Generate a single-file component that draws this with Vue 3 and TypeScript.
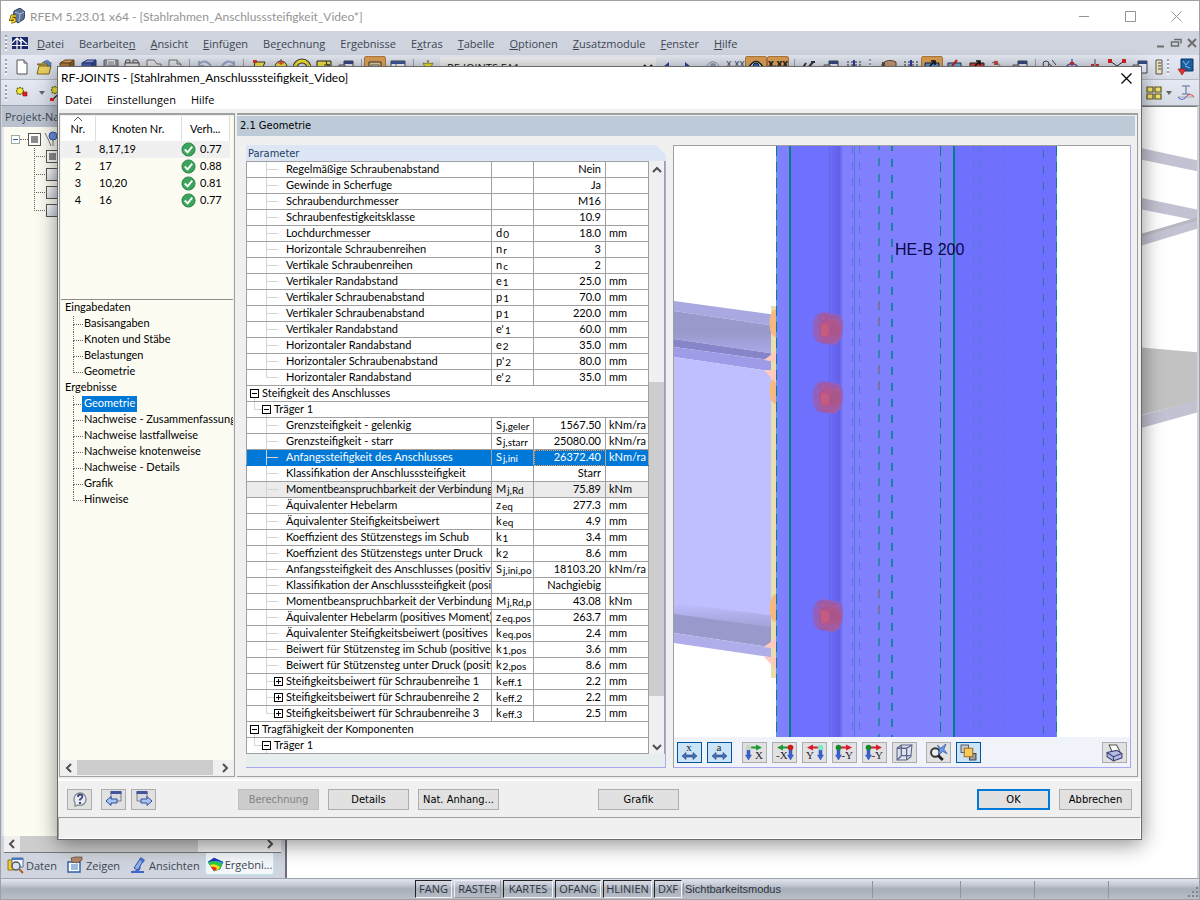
<script setup lang="ts">
import { h, ref } from 'vue'

type Stroke = [d: string, fill?: string, stroke?: string, width?: number]

const glyphs: Record<string, Stroke[]> = {
  page: [['M3 1h7l3 3v11h-10z', '#fff', '#555'], ['M10 1v3h3', '#dde', '#555']],
  open: [['M1 5h5l1-2h5v3h-10z', '#c9a93c', '#7b6414'], ['M1 15l2-8h12l-2 8z', '#e8cf5e', '#7b6414'], ['M8 3q4-4 6 1l1-1v4h-4l1-1q-1-3-3-1z', '#5f83b8', '#344f7e', 0.5]],
  boxBrown: [['M1 4l5-3h9l-4 3z', '#d9a466', '#6a4a22'], ['M1 4h10v11h-10z', '#b07a3a', '#6a4a22'], ['M11 4l4-3v11l-4 3z', '#8c5d27', '#6a4a22']],
  boxBlue: [['M1 4l5-3h9l-4 3z', '#8ea0e0', '#2b3a80'], ['M1 4h10v11h-10z', '#4b62bc', '#2b3a80'], ['M11 4l4-3v11l-4 3z', '#35488f', '#2b3a80']],
  disk: [['M1 1h14v14h-14z', '#9a9aa4', '#66666e'], ['M4 1h8v5h-8z', '#e4e4ea'], ['M5 3h6M5 5h6', '', '#888']],
  box: [['M2 1h4v3h-5zM9 1h4l2 3h-6z', '#ddd', '#555'], ['M1 4h14v11h-14z', '#eee', '#555']],
  copy: [['M1 1h7l3 4h4v10h-11l-3-7z', '#e8e8ee', '#777']],
  doc: [['M2 1h8l4 4v10h-12z', '#e8e8ee', '#777'], ['M10 1v4h4', '#ccc', '#777']],
  undo: [['M2 5q6-6 12 2M2 2v5h5', '', '#9aa7c7', 2]],
  redo: [['M14 5q-6-6-12 2M14 2v5h-5', '', '#9aa7c7', 2]],
  poly: [['M4 3h10l-4 10h-8z', '#f6e94c', '#333'], ['M2 1h4v3h-4z', '#e03020']],
  circ: [['M2 8a6 6 0 1 1 12 0z', '#f6e94c', '#333'], ['M8 0v6M5 4h6', '', '#d22']],
  ring: [['M1 9a7 7 0 0 1 14 0', '', '#333', 5], ['M1 9a7 7 0 0 1 14 0', '', '#f2e22c', 3]],
  flag: [['M1 2h14v12h-14z', '#f3e850', '#222'], ['M10 2l1 4h3M8 6h6', '', '#333']],
  win: [['M6 2h9v12h-9z', '#eef', '#444'], ['M6 2h9v3h-9z', '#364a86'], ['M1 6h6v4h-6z', '#ccc', '#555']],
  frame: [['M2 3h12v10h-12z', '#f2cf9a', '#333'], ['M4 6h8v4h-8z', '#fff', '#664']],
  table: [['M1 2h14v12h-14z', '#fff', '#444'], ['M1 2h14v3h-14z', '#3f5a9c'], ['M1 8h14M6 5v9', '', '#777']],
  star: [['M8 1l1 4 4-1-2 4 3 3-4 1-2 3-2-3-4-1 3-3-2-4 4 1z', '#f6ec2e', '#6d6a18', 0.7]],
  prev: [['M11 3l-6 5 6 5z', '#2c3f9c']],
  next: [['M5 3l6 5-6 5z', '#2c3f9c']],
  eye: [['M1 8q7-11 14 0q-7 8-14 0z', '#e2e7ef', '#8b95a8'], ['M5 7a3 3 0 1 0 6 0a3 3 0 1 0-6 0z', '#8ea0bb']],
  eyeOn: [['M1 8q7-11 14 0q-7 8-14 0z', '#fff', '#222', 1.5], ['M5 7a3 3 0 1 0 6 0a3 3 0 1 0-6 0z', '#3567c0', '#123']],
  pen: [['M2 10l4-6M8 9l5-6M11 3h4', '', '#333', 2]],
  hand: [['M1 5q6-6 14-2v6h-14z', '#c99b78', '#5b4030'], ['M1 3h3v9h-3z', '#555']],
  grid: [['M1 3h2M5 3h2M9 3h2M13 3h2M1 6h2M5 6h2M9 6h2M13 6h2', '', '#333', 1], ['M8 1v8', '', '#2a3bb0', 2]],
  move: [['M1 4h14v8h-14z', '#5a9bdc', '#124'], ['M4 9l6-6M7 2h4v4', '', '#111', 1.5]],
  moveRed: [['M1 4h14v8h-14z', '#d8433a', '#222'], ['M4 9l6-6M7 2h4v4', '', '#111', 1.5]],
  slash: [['M1 4h13v8h-13z', '#7cb0dd', '#235'], ['M5 7l5-6', '', '#c22', 2]],
  nodes: [['M2 4l4-2 4 5 5 3', '', '#568'], ['M4 2h4v4h-4z', '#c9463f']],
  link: [['M1 5a3 3 0 1 0 6 0a3 3 0 1 0-6 0zM7 5l7 5M10 1l4 5', '', '#444']],
  cut: [['M2 8q6-7 12 0M8 0v12', '', '#4b6fb5', 1.5], ['M6 3h4v3h-4z', '#c33']],
  mirror: [['M8 0v14', '', '#555'], ['M4 5h3v6h-3zM9 5h3v6h-3z', '#c33']],
  vee: [['M1 2l7 5 7-5', '', '#333'], ['M-1 0h4v4h-4zM13 0h4v4h-4z', '#d92020']],
  scroll: [['M6 1h6v14h-6z', '#f1e4b8', '#555'], ['M8 4h3M8 7h3M8 10h3', '', '#345']],
  photo: [['M3 0h12v12h-12z', '#1c5e9e', '#0c3560'], ['M5 2l3 4 3-4M7 7l5 2', '', '#7ec2f2'], ['M0 10h8l-4 6z', '#e22f2f', '#811', 0.6]],
  newNode: [['M5 2v8M1 6h8M2 3l6 6M8 3l-6 6', '', '#77731c', 2], ['M5 3v6M2 6h6M3 4l4 4M7 4l-4 4', '', '#f4ec3a', 1.4], ['M8 7h4v4h-4z', '#e02020', '#911', 0.6]],
  newLine: [['M6 1v8M2 5h8M3 2l6 6M9 2l-6 6', '', '#77731c', 2], ['M6 2v6M3 5h6M4 3l4 4M8 3l-4 4', '', '#f4ec3a', 1.4], ['M3 15l12-11', '', '#222', 1.2], ['M1 13h4v3h-4z', '#e02020']],
  quad: [['M1 2h6v5h-6zM9 2h6v5h-6zM1 9h6v5h-6zM9 9h6v5h-6z', '#f2e36c', '#5c5320', 1.2]],
  beam: [['M4 1h8M8 1v8M4 9h8', '', '#8492b4', 1.5], ['M0 12q4 5 8 0', '', '#4666e0', 1.2], ['M8 12q4-5 8 0', '', '#e54848', 1.2], ['M0 12h16', '', '#888', 0.6]],
  daten: [['M1 3h6v10h-6z', '#f2c832', '#997611'], ['M5 1h11v9h-11z', '#fff', '#4a6aa8'], ['M5 1h11v2h-11z', '#4a79c8'], ['M5 9a4 4 0 1 0 8 0a4 4 0 1 0-8 0z', '#d7e6f6', '#555', 1.4], ['M12 12l4 4', '', '#a4632c', 2]],
  zeigen: [['M1 5h12v10h-12z', '#fff', '#2b5fa8', 1.4], ['M4 8h7M4 10h7M4 12h7', '', '#3c78c8'], ['M4 1l4-1h7v3l-5 3-5-1z', '#b5876a', '#5b4434', 0.7]],
  ansicht: [['M1 15q8 0 9-5M2 15h12', '', '#4169c8', 2], ['M4 11l6-9 3 2-5 9z', '#8fb0ee', '#3050a0'], ['M9 2l2-2 4 3-2 3z', '#4a6cc8']],
  ergebnis: [['M1 5l6-4 9 4-3 7-6 2z', '#12a2e8', '#164b8a', 0.6], ['M1 5q8-3 14 2l-2 5-6 2z', '#30c848'], ['M3 8q5-2 10 2l-1 2-5 2z', '#f6e020'], ['M4 10q4-1 6 2l-3 2z', '#e82a18'], ['M1 5l6-4 9 4q-7-2-15 0z', '#2030c8']],
  help: [['M2 8a6 6 0 1 1 12 0a6 6 0 0 1-8 6l-3 1v-3a6 6 0 0 1-1-4z', '#e9ecf2', '#8a8f98', 1.4], ['M6 6q0-2.500 2-2.500q2.400 0 2.400 2q0 1.500-2.400 3v1', '', '#3d4c80', 1.8], ['M7 11h2v2h-2z', '#3d4c80']],
  pagePrev: [['M5 1h10v9h-10z', '#d9dade', '#7b7e86'], ['M4.500 0h11v3h-11z', '#44549c'], ['M0 10l5-4.500v2.500h6v4h-6v2.500z', '#a9c4ee', '#2b4da0']],
  pageNext: [['M1 1h10v9h-10z', '#d9dade', '#7b7e86'], ['M.5 0h11v3h-11z', '#44549c'], ['M16 10l-5-4.500v2.500h-6v4h6v2.500z', '#a9c4ee', '#2b4da0']],
  cube: [['M1 4l4-3h10l-1 11-4 3h-9z', '#dfe3ee', '#5b6688'], ['M1 4h9v11M10 4l5-3M5 1v10h9M5 11l-4 4', '', '#5b6688', 1.2]],
  unzoom: [['M1 8a4 4 0 1 0 8 0a4 4 0 1 0-8 0z', '#e8edf2', '#333', 1.8], ['M8 11l4 4', '', '#222', 2.6], ['M7 1l3 3 5-4-2 5 3 4-4-2-4 3 1-5z', '#6f9bea', '#2f51a8', 0.7]],
  layers: [['M1 1h7v7h-7z', '#c8ccd4', '#555c6a'], ['M9 9h6v6h-6z', '#9aa0ac', '#444'], ['M4 4h8v8h-8z', '#f8c95c', '#a07018']],
  printer: [['M3 1h7l3 6-7 1z', '#fff', '#555'], ['M1 8l9-2 5 3v4l-8 3-6-4z', '#b4bbe6', '#3b4070'], ['M1 8l6 4 8-3M7 12v4', '', '#3b4070']],
  logo: [['M5 3l6-3 5 4-1 7-6 4-5-4z', '#5d7396', '#2b3c58'], ['M6 4l5 2 4-2M11 6l-1 8', '', '#aebed8'], ['M7 8h-4l-1 3q4-1 4 1q0 2-4 2', '', '#5e4c0c', 3], ['M7 8h-4l-1 3q4-1 4 1q0 2-4 2', '', '#f4c81c', 1.7]],
  dlubal: [['M0 2h16v12h-16z', '#1c2a6e'], ['M0 10.500h16M0 8l5-5 5 5M8 3l7 6M5 3v11M9 4v10', '', '#fff', 1.2]],
  check: [['M1 8a7 7 0 1 1 14 0a7 7 0 1 1-14 0z', '#3ba55c', '#2c8048'], ['M4 8l3 3 5-6', '', '#fff', 2]],
  node: [['M5 5a4 4 0 1 0 8 0a4 4 0 1 0-8 0z', '#6f8fe0', '#3a55a0'], ['M1 2l4 8 2 5M9 9v6M12 4h4', '', '#777']],
}

const Glyph = (p: { name: string }) =>
  h(
    'svg',
    { viewBox: '0 0 16 16', 'aria-hidden': 'true' },
    glyphs[p.name].map(([d, fill, stroke, width]) =>
      h('path', { d, fill: fill || 'none', stroke: stroke || 'none', 'stroke-width': width ?? 1 }),
    ),
  )

const Chevron = (p: { dir: string }) =>
  h('svg', { viewBox: '0 0 10 10', 'aria-hidden': 'true' }, [
    h('path', {
      d: { left: 'M7 1L3 5l4 4', right: 'M3 1l4 4-4 4', up: 'M1 7l4-4 4 4', down: 'M1 3l4 4 4-4' }[p.dir],
      fill: 'none',
      stroke: '#505050',
      'stroke-width': 2,
    }),
  ])

const mainMenu: [string, string, string][] = [
  ['', 'D', 'atei'], ['Bearbeite', 'n', ''], ['', 'A', 'nsicht'], ['', 'E', 'infügen'], ['Be', 'r', 'echnung'],
  ['Er', 'g', 'ebnisse'], ['E', 'x', 'tras'], ['', 'T', 'abelle'], ['', 'O', 'ptionen'], ['', 'Z', 'usatzmodule'],
  ['', 'F', 'enster'], ['', 'H', 'ilfe'],
]

interface Tool { icon: string; w: number; on?: boolean }
const tools: Tool[] = [
  { icon: 'page', w: 22 }, { icon: 'open', w: 22 }, { icon: 'boxBrown', w: 23 }, { icon: 'boxBlue', w: 22 },
  { icon: 'disk', w: 21 }, { icon: 'box', w: 22 }, { icon: 'copy', w: 22 }, { icon: 'doc', w: 20 },
  { icon: 'sep', w: 8 }, { icon: 'undo', w: 23 }, { icon: 'redo', w: 24 }, { icon: 'sep', w: 6 },
  { icon: 'poly', w: 26 }, { icon: 'circ', w: 18 }, { icon: 'ring', w: 24 }, { icon: 'flag', w: 20 },
  { icon: 'win', w: 24 }, { icon: 'sep', w: 6 }, { icon: 'frame', w: 22, on: true }, { icon: 'table', w: 24 },
  { icon: 'sep', w: 6 }, { icon: 'star', w: 24 }, { icon: 'combo', w: 216 }, { icon: 'prev', w: 20 },
  { icon: 'next', w: 24 }, { icon: 'eye', w: 26 }, { icon: 'xx', w: 19 }, { icon: 'eyeOn', w: 22, on: true },
  { icon: 'xx', w: 22, on: true }, { icon: 'sep', w: 10 }, { icon: 'pen', w: 18 }, { icon: 'win', w: 28 },
  { icon: 'grid', w: 18 }, { icon: 'grip', w: 14 }, { icon: 'hand', w: 24 }, { icon: 'grid', w: 20 },
  { icon: 'move', w: 22, on: true }, { icon: 'slash', w: 24 }, { icon: 'moveRed', w: 20 }, { icon: 'nodes', w: 22 },
  { icon: 'win', w: 22 }, { icon: 'sep', w: 8 }, { icon: 'link', w: 22 }, { icon: 'cut', w: 22 },
  { icon: 'mirror', w: 24 }, { icon: 'vee', w: 20 }, { icon: 'win', w: 26 }, { icon: 'scroll', w: 10 },
  { icon: 'grip', w: 10 }, { icon: 'photo', w: 26 },
]

const nodesList = [
  ['1', '8,17,19', '0.77'], ['2', '17', '0.88'], ['3', '10,20', '0.81'], ['4', '16', '0.77'],
]

const nav = [
  { title: 'Eingabedaten', items: ['Basisangaben', 'Knoten und Stäbe', 'Belastungen', 'Geometrie'] },
  { title: 'Ergebnisse', items: ['Geometrie', 'Nachweise - Zusammenfassung', 'Nachweise lastfallweise', 'Nachweise knotenweise', 'Nachweise - Details', 'Grafik', 'Hinweise'] },
]
const current = ref('Ergebnisse/Geometrie')

interface Row { kind: 'leaf' | 'last' | 'plus' | 'plusLast' | 'group' | 'sub'; name: string; sym?: string; sub?: string; val?: string; unit?: string; mark?: string }
const leaf = (name: string, sym = '', sub = '', val = '', unit = '', kind: Row['kind'] = 'leaf', mark = ''): Row =>
  ({ kind, name, sym, sub, val, unit, mark })
const rows: Row[] = [
  leaf('Regelmäßige Schraubenabstand', '', '', 'Nein'),
  leaf('Gewinde in Scherfuge', '', '', 'Ja'),
  leaf('Schraubendurchmesser', '', '', 'M16'),
  leaf('Schraubenfestigkeitsklasse', '', '', '10.9'),
  leaf('Lochdurchmesser', 'd', '0', '18.0', 'mm'),
  leaf('Horizontale Schraubenreihen', 'n', 'r', '3'),
  leaf('Vertikale Schraubenreihen', 'n', 'c', '2'),
  leaf('Vertikaler Randabstand', 'e', '1', '25.0', 'mm'),
  leaf('Vertikaler Schraubenabstand', 'p', '1', '70.0', 'mm'),
  leaf('Vertikaler Schraubenabstand', 'p', '1', '220.0', 'mm'),
  leaf('Vertikaler Randabstand', "e'", '1', '60.0', 'mm'),
  leaf('Horizontaler Randabstand', 'e', '2', '35.0', 'mm'),
  leaf('Horizontaler Schraubenabstand', "p'", '2', '80.0', 'mm'),
  leaf('Horizontaler Randabstand', "e'", '2', '35.0', 'mm', 'last'),
  { kind: 'group', name: 'Steifigkeit des Anschlusses' },
  { kind: 'sub', name: 'Träger 1' },
  leaf('Grenzsteifigkeit - gelenkig', 'S', 'j,geler', '1567.50', 'kNm/ra'),
  leaf('Grenzsteifigkeit - starr', 'S', 'j,starr', '25080.00', 'kNm/ra'),
  leaf('Anfangssteifigkeit des Anschlusses', 'S', 'j,ini', '26372.40', 'kNm/ra', 'leaf', 'active'),
  leaf('Klassifikation der Anschlusssteifigkeit', '', '', 'Starr'),
  leaf('Momentbeanspruchbarkeit der Verbindung', 'M', 'j,Rd', '75.89', 'kNm', 'leaf', 'shade'),
  leaf('Äquivalenter Hebelarm', 'z', 'eq', '277.3', 'mm'),
  leaf('Äquivalenter Steifigkeitsbeiwert', 'k', 'eq', '4.9', 'mm'),
  leaf('Koeffizient des Stützenstegs im Schub', 'k', '1', '3.4', 'mm'),
  leaf('Koeffizient des Stützenstegs unter Druck', 'k', '2', '8.6', 'mm'),
  leaf('Anfangssteifigkeit des Anschlusses (positiv', 'S', 'j,ini,po', '18103.20', 'kNm/ra'),
  leaf('Klassifikation der Anschlusssteifigkeit (posit', '', '', 'Nachgiebig'),
  leaf('Momentbeanspruchbarkeit der Verbindung', 'M', 'j,Rd,p', '43.08', 'kNm'),
  leaf('Äquivalenter Hebelarm (positives Moment)', 'z', 'eq.pos', '263.7', 'mm'),
  leaf('Äquivalenter Steifigkeitsbeiwert (positives M', 'k', 'eq.pos', '2.4', 'mm'),
  leaf('Beiwert für Stützensteg im Schub (positives', 'k', '1,pos', '3.6', 'mm'),
  leaf('Beiwert für Stützensteg unter Druck (positiv', 'k', '2,pos', '8.6', 'mm'),
  leaf('Steifigkeitsbeiwert für Schraubenreihe 1', 'k', 'eff.1', '2.2', 'mm', 'plus'),
  leaf('Steifigkeitsbeiwert für Schraubenreihe 2', 'k', 'eff.2', '2.2', 'mm', 'plus'),
  leaf('Steifigkeitsbeiwert für Schraubenreihe 3', 'k', 'eff.3', '2.5', 'mm', 'plusLast'),
  { kind: 'group', name: 'Tragfähigkeit der Komponenten' },
  { kind: 'sub', name: 'Träger 1' },
]
const twigs: Record<Row['kind'], string> = {
  leaf: 'M19.5 0V16M19.5 7.5H31', last: 'M19.5 0V7.5H31', plus: 'M19.5 0V16M19.5 7.5H27',
  plusLast: 'M19.5 0V7.5H27', group: 'M7.500 12V16', sub: 'M7.500 0V7.5H15M19.5 12V16',
}
const boxX: Partial<Record<Row['kind'], number>> = { plus: 27, plusLast: 27, group: 3, sub: 15 }
const twigWidth = (k: Row['kind']) => (k === 'group' ? 15 : k === 'sub' ? 27 : 39)

// Each standard view pairs one horizontal axis arrow with the vertical z axis.
const axes = [
  { label: 'X', side: 'left', arrow: '#1d9a33', ball: '#c8d8c8' },
  { label: '-X', side: 'right', arrow: '#1d9a33', ball: '#d01818' },
  { label: 'Y', side: 'right', arrow: '#d81c2c', ball: '#7ee8c8' },
  { label: '-Y', side: 'left', arrow: '#d81c2c', ball: '#138a28' },
  { label: '-Y', side: 'left', arrow: '#d81c2c', ball: '#138a28' },
]

const bolts = [329, 398, 616]
const faintLines: [number, string][] = [[852.5, '8 8'], [854.5, ''], [859.5, '8 8'], [973.5, '8 8'], [978.5, '8 8'], [980.5, '7 9'], [1003.5, '8 8']]

const tabs = [
  { icon: 'daten', label: 'Daten' }, { icon: 'zeigen', label: 'Zeigen' },
  { icon: 'ansicht', label: 'Ansichten' }, { icon: 'ergebnis', label: 'Ergebni...', on: true },
]
const modes = [
  { label: 'FANG', w: 37 }, { label: 'RASTER', w: 47, up: true }, { label: 'KARTES', w: 50 },
  { label: 'OFANG', w: 46 }, { label: 'HLINIEN', w: 49 }, { label: 'DXF', w: 28 },
]
</script>

<template>
  <div class="app">
    <header class="titlebar">
      <Glyph name="logo" class="logo" />
      <span class="title">RFEM 5.23.01 x64 - [Stahlrahmen_Anschlusssteifigkeit_Video*]</span>
      <button class="winbtn" aria-label="Minimieren"><svg viewBox="0 0 11 11"><path d="M0 5.500H10" /></svg></button>
      <button class="winbtn" aria-label="Maximieren"><svg viewBox="0 0 11 11"><path d="M.5.5h10v10h-10z" /></svg></button>
      <button class="winbtn" aria-label="Schließen"><svg viewBox="0 0 11 11"><path d="M.5.5l10 10M10.500.5l-10 10" /></svg></button>
    </header>

    <nav class="menubar">
      <span class="grip"></span>
      <Glyph name="dlubal" class="icon" />
      <button v-for="m in mainMenu" :key="m.join('')" class="menu">{{ m[0] }}<u>{{ m[1] }}</u>{{ m[2] }}</button>
      <svg class="mdi" viewBox="0 0 42 12" aria-hidden="true">
        <path d="M1 9.500h7" stroke-width="2" />
        <path d="M18 2.500h7v4M15.500 5h7v4h-7z" stroke-width="1.5" />
        <path d="M32 2l8 8M40 2l-8 8" stroke-width="2" />
      </svg>
    </nav>

    <div class="toolbar first">
      <span class="grip"></span>
      <template v-for="(t, i) in tools" :key="i">
        <span v-if="t.icon === 'sep'" class="sep" :style="{ width: t.w + 'px' }"></span>
        <span v-else-if="t.icon === 'grip'" class="gripcell" :style="{ width: t.w + 'px' }"><span class="grip"></span></span>
        <select v-else-if="t.icon === 'combo'" class="combo" aria-label="Lastfall" :style="{ width: t.w + 'px' }"><option>RF-JOINTS FA1</option></select>
        <button v-else class="tool" :class="{ on: t.on }" :style="{ width: t.w + 'px' }" :aria-label="t.icon">
          <span v-if="t.icon === 'xx'" class="xx">x.xx</span>
          <Glyph v-else :name="t.icon" class="icon" />
        </button>
      </template>
    </div>
    <div class="toolbar second">
      <span class="grip"></span>
      <button class="tool wide" aria-label="Neuer Knoten"><Glyph name="newNode" class="icon" /></button>
      <span class="caret"></span>
      <button class="tool slim" aria-label="Neue Linie"><Glyph name="newLine" class="icon" /></button>
      <button class="tool slim push" aria-label="Fenster anordnen"><Glyph name="quad" class="icon" /></button>
      <span class="caret"></span>
      <button class="tool" aria-label="Querschnitt"><Glyph name="beam" class="icon" /></button>
    </div>

    <main class="desk">
      <aside class="dock">
        <h2 class="dockhead">Projekt-Navigator</h2>
        <div class="project">
          <div class="prow">
            <span class="minus"></span><span class="dots"></span>
            <input class="tick part" type="checkbox" aria-label="Ergebnisse" />
            <Glyph name="node" class="icon" />
          </div>
          <ul class="kids">
            <li v-for="n in 4" :key="n"><input class="tick" :class="{ part: n === 1 }" type="checkbox" :aria-label="'Ergebnis ' + n" /></li>
          </ul>
        </div>
        <div class="hscroll outer"><Chevron dir="left" class="chev" /><span class="thumb"></span><Chevron dir="right" class="chev" /></div>
        <div class="tabs">
          <button v-for="t in tabs" :key="t.label" class="tab" :class="{ on: t.on }"><Glyph :name="t.icon" class="icon" />{{ t.label }}</button>
        </div>
      </aside>
      <section class="canvas">
        <svg viewBox="288 109 909 767" preserveAspectRatio="xMaxYMin slice" aria-hidden="true">
          <path d="M1092 139L1197 162V173L1092 151z" fill="#c3c2d2" />
          <path d="M1092 189L1197 211V222L1092 201z" fill="#c3c2d2" />
          <path d="M1092 250L1197 219V230L1092 262z" fill="#c3c2d2" />
          <path d="M1142 235L1197 219V222L1142 238z" fill="#b7b7be" />
          <path d="M1092 344L1197 353V402L1092 427z" fill="#c2c2c2" />
          <path d="M1092 429L1197 401V413L1092 442z" fill="#c3c2d2" />
        </svg>
      </section>
    </main>

    <footer class="statusbar">
      <div class="modes">
        <button v-for="m in modes" :key="m.label" class="mode" :class="{ up: m.up }" :style="{ width: m.w + 'px' }">{{ m.label }}</button>
      </div>
      <span class="state">Sichtbarkeitsmodus</span>
      <span class="cell first"></span><span class="cell"></span><span class="cell"></span><span class="cell end"></span>
      <svg class="sizer" viewBox="0 0 12 12" aria-hidden="true"><path d="M9 0h2v2H9zM5 4h2v2H5zM9 4h2v2H9zM1 8h2v2H1zM5 8h2v2H5zM9 8h2v2H9z" fill="#7d828c" /></svg>
    </footer>

    <div class="dialog" role="dialog" aria-label="RF-JOINTS">
      <header class="dtitle">
        <span>RF-JOINTS - [Stahlrahmen_Anschlusssteifigkeit_Video]</span>
        <button class="dclose" aria-label="Dialog schließen"><svg viewBox="0 0 11 11"><path d="M.5.5l10 10M10.500.5l-10 10" /></svg></button>
      </header>
      <nav class="dmenu"><button>Datei</button><button>Einstellungen</button><button>Hilfe</button></nav>

      <div class="dbody">
        <div class="side">
          <div class="list">
            <table>
              <thead>
                <tr><th class="cnr"><svg class="sort" viewBox="0 0 8 4"><path d="M0 4l4-4 4 4" /></svg>Nr.</th><th class="ckn">Knoten Nr.</th><th>Verh...</th></tr>
              </thead>
              <tbody>
                <tr v-for="(n, i) in nodesList" :key="n[0]" :class="{ hot: i === 0 }">
                  <td class="cnr">{{ n[0] }}</td><td class="ckn">{{ n[1] }}</td>
                  <td><span class="ratio"><Glyph name="check" class="ok" />{{ n[2] }}</span></td>
                </tr>
              </tbody>
            </table>
          </div>
          <div class="nav">
            <template v-for="g in nav" :key="g.title">
              <div class="navhead">{{ g.title }}</div>
              <ul>
                <li v-for="it in g.items" :key="it">
                  <a href="#" :class="{ sel: current === g.title + '/' + it }" @click.prevent="current = g.title + '/' + it">{{ it }}</a>
                </li>
              </ul>
            </template>
          </div>
          <div class="hscroll"><Chevron dir="left" class="chev" /><span class="thumb"></span><Chevron dir="right" class="chev" /></div>
        </div>

        <div class="content">
          <h1>2.1 Geometrie</h1>
          <div class="split">
            <section class="params">
              <h2>Parameter</h2>
              <div class="gridwrap">
                <table class="grid">
                  <colgroup><col /><col class="c2" /><col class="c3" /><col class="c4" /></colgroup>
                  <tbody>
                    <tr v-for="(r, i) in rows" :key="i" :class="r.mark">
                      <td :colspan="r.kind === 'group' || r.kind === 'sub' ? 4 : 1">
                        <div class="name">
                          <svg class="twig" :width="twigWidth(r.kind)" height="15" aria-hidden="true">
                            <path :d="twigs[r.kind]" class="line" />
                            <template v-if="boxX[r.kind] !== undefined">
                              <rect :x="boxX[r.kind]! + 0.5" y="3.500" width="8" height="8" fill="#fff" stroke="#000" />
                              <path :d="`M${boxX[r.kind]! + 2} 7.5h5` + (r.kind.startsWith('plus') ? 'm-2.5-2.5v5' : '')" stroke="#000" />
                            </template>
                          </svg>
                          <span>{{ r.name }}</span>
                        </div>
                      </td>
                      <template v-if="r.kind !== 'group' && r.kind !== 'sub'">
                        <td><div class="sym">{{ r.sym }}<span v-if="r.sub" class="idx">{{ r.sub }}</span></div></td>
                        <td class="val"><div>{{ r.val }}</div></td>
                        <td><div class="unit">{{ r.unit }}</div></td>
                      </template>
                    </tr>
                  </tbody>
                </table>
                <div class="vscroll"><Chevron dir="up" class="chev" /><span class="above"></span><span class="thumb"></span><span class="below"></span><Chevron dir="down" class="chev" /></div>
              </div>
            </section>

            <section class="viewer">
              <div class="scene">
                <svg viewBox="674 146 456 591" preserveAspectRatio="xMinYMin slice" role="img" aria-label="Anschlussmodell">
                  <defs>
                    <linearGradient id="fillet"><stop offset="0" stop-color="#6e6eff" /><stop offset=".45" stop-color="#6663ee" /><stop offset=".75" stop-color="#6360e8" /><stop offset="1" stop-color="#8080ff" /></linearGradient>
                    <linearGradient id="root" x1="0" y1="0" x2="0" y2="1"><stop offset="0" stop-color="#bfbeff" /><stop offset="1" stop-color="#9998cb" /></linearGradient>
                    <linearGradient id="flange" x1="0" y1="0" x2="0" y2="1"><stop offset=".5" stop-color="#9a99cb" /><stop offset="1" stop-color="#aaa9ea" /></linearGradient>
                  </defs>
                  <path d="M674 301L776 315V326L674 311z" fill="#a9a8e0" />
                  <path d="M674 311L776 326V354L674 339z" fill="url(#flange)" />
                  <path d="M674 339L776 354V361L674 347z" fill="#8785ca" />
                  <path d="M674 347L776 361V372L674 357z" fill="#9e9ce9" />
                  <path d="M674 357L776 372V632L674 620z" fill="#bfbeff" />
                  <path d="M674 603L776 616V634L674 620z" fill="url(#root)" />
                  <path d="M674 614L776 628V648L674 633z" fill="#9a99cb" />
                  <path d="M674 633L776 648V658L674 643z" fill="#b0aeea" />
                  <path d="M771 306h5v372h-5z" fill="#e9dfac" />
                  <path v-for="y in [324, 391, 609]" :key="y" :d="`M776 ${y - 15}q-6 2-6.500 13q0 14 6.500 15z`" fill="#f4b982" />
                  <path d="M764 360l12-9v11zM764 370l12 0v13zM764 647l12-9v11zM764 657l12 0v12z" fill="#ffc9bd" />
                  <path d="M776 146h281v591h-281z" fill="#8080ff" />
                  <path d="M790 146h40v591h-40zM954 146h103v591h-103z" fill="#7070ff" />
                  <path d="M829 146h14v591h-14z" fill="url(#fillet)" />
                  <path v-for="f in faintLines" :key="f[0]" :d="`M${f[0]} 146V737`" stroke="#5a78d8" :stroke-dasharray="f[1] || 'none'" />
                  <path d="M829.5 146V737" stroke="#6268dd" />
                  <path d="M879 146V737" stroke="#3a80b8" stroke-width="2" stroke-dasharray="8 8" stroke-dashoffset="4" />
                  <path d="M879 301v8M879 317v8M879 365v8M879 381v8M879 589v8M879 605v8" stroke="#7c70a8" stroke-width="2" />
                  <path d="M892 146V737" stroke="#1e809a" stroke-width="2" stroke-dasharray="8 8" stroke-dashoffset="3" />
                  <path d="M1043.5 146V737" stroke="#20789c" stroke-dasharray="8 8" stroke-dashoffset="12" />
                  <path d="M776.5 146V737M940.5 146V737M1056.5 146V737" stroke="#4f9fd0" />
                  <path d="M776.5 146V737M940.5 146V737M1056.5 146V737" stroke="#008080" stroke-dasharray="10 6" />
                  <path d="M790 146V737M954 146V737" stroke="#008080" stroke-width="2" />
                  <g v-for="y in bolts" :key="y" :transform="`translate(828 ${y})`">
                    <path d="M-15 0q0-16 10-17l12 2q8 0 8 12l-1 10q-3 9-10 9l-12-2q-7-2-7-14z" fill="#9560ba" />
                    <path d="M-8-9q2-7 8-6l9 4q5 5 5 12t-5 11q-6 4-13 1q-5-3-5-10z" fill="#a65a9e" />
                    <path d="M-9-3q1-6 5-6h9q5 3 5 9t-4 8h-9q-5-3-6-11z" fill="#b3558c" />
                    <path d="M-7-5h5q3 0 3 6t-3 6h-5z" fill="#c45b80" />
                    <ellipse cx="7" rx="5" ry="7" fill="#a9568a" />
                    <path d="M-9-12l5-3 3 4-4 4zM-10 11q5 5 9 1M3-12q5-2 8 1" fill="#b25a95" stroke="#7c5ac4" stroke-width=".8" />
                  </g>
                  <text x="895" y="255" class="tag">HE-B 200</text>
                </svg>
              </div>
              <div class="vtools">
                <button v-for="c in ['x', 'a']" :key="c" class="vbtn on" :aria-label="'Bemaßung ' + c">
                  <svg viewBox="0 0 19 17"><text x="9" y="7" text-anchor="middle" class="let">{{ c }}</text><path d="M2 12l4-3.500v2.500h7V8.500l4 3.500-4 3.500v-2.500H6v2.500z" fill="#4a70b8" stroke="#24417c" stroke-width=".6" /></svg>
                </button>
                <span class="gap"></span>
                <button v-for="(a, i) in axes" :key="i" class="vbtn" :aria-label="'Ansicht ' + a.label">
                  <svg viewBox="0 0 19 17">
                    <g :transform="a.side === 'right' ? 'translate(19 0) scale(-1 1)' : undefined">
                      <path d="M4 2.500h7V.5l6 3-6 3V4.500H4z" :fill="a.arrow" />
                      <path d="M2 4h3v7h1.500L3.500 16 .5 11H2z" fill="#3a62d8" stroke="#1c3a98" stroke-width=".4" />
                      <circle cx="3.500" cy="3.500" r="2.800" :fill="a.ball" />
                    </g>
                    <text :x="a.side === 'right' ? 1 : 18" y="15" :text-anchor="a.side === 'right' ? 'start' : 'end'" class="let">{{ a.label }}</text>
                  </svg>
                </button>
                <button class="vbtn" aria-label="Isometrie"><Glyph name="cube" class="icon" /></button>
                <span class="gap mini"></span>
                <button class="vbtn" aria-label="Zoom zurücksetzen"><Glyph name="unzoom" class="icon" /></button>
                <button class="vbtn on" aria-label="Transparenz"><Glyph name="layers" class="icon" /></button>
                <button class="vbtn push" aria-label="Drucken"><Glyph name="printer" class="icon" /></button>
              </div>
            </section>
          </div>
        </div>
      </div>

      <div class="actions">
        <button class="btn sq" aria-label="Hilfe"><Glyph name="help" class="icon" /></button>
        <button class="btn sq back" aria-label="Zurück"><Glyph name="pagePrev" class="icon" /></button>
        <button class="btn sq fwd" aria-label="Weiter"><Glyph name="pageNext" class="icon" /></button>
        <button class="btn calc" disabled>Berechnung</button>
        <button class="btn">Details</button>
        <button class="btn">Nat. Anhang...</button>
        <button class="btn graf">Grafik</button>
        <button class="btn small push ok">OK</button>
        <button class="btn small">Abbrechen</button>
      </div>
      <div class="dstatus"></div>
    </div>
  </div>
</template>

<style>
html, body { margin: 0; background: #d0d5df; }
</style>

<style scoped>
* { box-sizing: border-box; }
button, select, input { font: inherit; color: inherit; margin: 0; padding: 0; border: 0; background: none; }
h1, h2, ul { margin: 0; padding: 0; font-weight: normal; list-style: none; }
.app { position: relative; display: flex; flex-direction: column; height: 100vh; min-height: 700px; overflow: hidden; border: 1px solid #a0a0a0; background: #d0d4de; font-family: "Open Sans", "Noto Sans", sans-serif; font-size: 11px; color: #3c4654; }
.icon { width: 16px; height: 16px; flex: none; overflow: visible; }
.push { margin-left: auto; }

.titlebar { display: flex; align-items: center; height: 30px; flex: none; background: #fff; color: #949494; padding-left: 8px; }
.logo { width: 16px; height: 16px; margin-right: 5px; }
.title { flex: 1; font-family: Lato, "Open Sans", sans-serif; font-size: 12px; }
.winbtn { width: 46px; height: 30px; }
.winbtn svg { width: 11px; height: 11px; fill: none; stroke: #949494; display: block; margin: auto; }

.menubar { display: flex; align-items: center; height: 24px; flex: none; padding: 0 1px 0 4px; }
.menubar .icon { margin: 0 9px 0 5px; }
.menu { margin-right: 15px; white-space: nowrap; }
.mdi { width: 42px; height: 12px; margin-left: auto; fill: none; stroke: #6c6c6c; }
.grip { flex: none; width: 2px; height: 16px; background: repeating-linear-gradient(#9aa0ac 0 2px, #f4f6fa 2px 4px); }

.toolbar { display: flex; align-items: center; flex: none; height: 25px; padding: 0 2px 0 4px; background: linear-gradient(#e4e9f3, #d6dbe6); border-bottom: 1px solid #b4b9c4; overflow: hidden; }
.toolbar.first > .grip { margin-right: 4px; }
.toolbar.second { height: 26px; border-bottom-color: #9da2ad; }
.tool { display: flex; align-items: center; justify-content: center; flex: none; width: 22px; height: 22px; }
.tool.wide { width: 26px; margin-left: 3px; }
.tool.slim { width: 18px; }
.tool.on { background: linear-gradient(#d99a4e, #f6c784); border: 1px solid #b07a3a; border-radius: 2px; }
.tool.push { margin-left: auto; }
.xx { font-size: 10px; line-height: 10px; margin-top: -8px; }
.tool.on .xx { font-weight: bold; color: #222; }
.sep { flex: none; height: 16px; background: linear-gradient(#9ea4b0, #9ea4b0) center / 1px 100% no-repeat; }
.gripcell { flex: none; display: flex; justify-content: center; }
.combo { flex: none; height: 20px; background: #f1f1f2; color: #111; padding-left: 3px; }
.caret { flex: none; border: 3px solid transparent; border-top: 4px solid #666; border-bottom: 0; margin: 0 3px; }

.desk { flex: 1; min-height: 0; display: flex; }
.dock { width: 284px; flex: none; display: flex; flex-direction: column; padding: 0 4px 0 1px; }
.dockhead { height: 21px; line-height: 22px; padding-left: 3px; font-size: 11px; background: #bbc2cf; }
.project { flex: 1; background: #fcfcf3; border-left: 2px solid #e4e8f4; padding: 3px 0 0 7px; }
.prow { display: flex; align-items: center; height: 18px; }
.minus { width: 9px; height: 9px; border: 1px solid #9aa; background: linear-gradient(#3a5aa0, #3a5aa0) center / 5px 1px no-repeat #fff; }
.dots { width: 8px; border-top: 1px dotted #666; }
.tick { appearance: none; display: block; width: 13px; height: 13px; border: 1px solid #555; background: linear-gradient(135deg, #fff, #c4cad6); }
.tick.part { background: linear-gradient(#8c8c8c, #8c8c8c) center / 7px 7px no-repeat #fff; }
.prow .icon { margin-left: 3px; }
.kids { margin-left: 23px; }
.kids li { height: 18px; padding: 2px 0 0 12px; position: relative; }
.kids li::before { content: ''; position: absolute; left: 0; top: -10px; width: 12px; height: 18px; border-left: 1px dotted #666; border-bottom: 1px dotted #666; }
.kids li:first-child::before { top: 0; height: 8px; }
.hscroll { display: flex; align-items: center; height: 15px; flex: none; background: #f0f0f0; }
.hscroll .thumb { background: #cdcdcd; align-self: stretch; flex: 1; margin-right: 4px; }
.chev { width: 10px; height: 10px; flex: none; margin: 0 3px; }
.hscroll.outer { height: 17px; border-bottom: 1px solid #777; margin-left: 2px; }
.hscroll.outer .thumb { flex: 0 1 178px; margin-right: auto; }
.hscroll.outer .chev:last-child { margin-right: 6px; }
.tabs { display: flex; height: 25px; flex: none; padding: 0 5px 3px; gap: 10px; font-size: 11px; }
.tab { display: flex; align-items: center; gap: 3px; white-space: nowrap; padding-top: 2px; }
.tab.on { background: #f4f7f9; border: 1px solid #bfe6ea; border-top: 0; border-radius: 0 0 3px 3px; padding: 2px 1px 0; margin-left: -5px; gap: 2px; }
.canvas { flex: 1; min-width: 0; background: #fff; border-left: 2px solid #6e6e78; border-top: 1px solid #777; margin-right: 2px; display: flex; }
.canvas svg { width: 100%; height: 100%; display: block; }

.statusbar { display: flex; align-items: center; height: 21px; flex: none; border-top: 1px solid #9ea2ac; background: linear-gradient(#e2e5ee 0, #c4c9d3 30%, #a9afb9 50%, #b9bec8 100%); color: #2c3440; }
.modes { display: flex; gap: 2px; margin-left: 414px; }
.mode { height: 18px; font-size: 11px; line-height: 16px; text-align: center; border: 1px solid; border-color: #222 #f4f4f8 #f4f4f8 #222; white-space: nowrap; }
.mode.up { border-color: #eef #999 #999 #eef; line-height: 14px; }
.state { font-family: "Liberation Sans", Arial, sans-serif; font-size: 11px; margin-left: 1px; padding-left: 1px; border-left: 1px solid #8f949e; flex: 1; }
.cell { width: 74px; height: 17px; border-left: 1px solid #8f949e; }
.cell.first { width: 88px; }
.cell.end { width: 79px; }
.sizer { width: 12px; height: 12px; align-self: flex-end; }

.dialog { position: absolute; left: 56px; right: 57px; top: 65px; bottom: 59px; display: flex; flex-direction: column; background: #f0f0f0; border: 1px solid #6a6a6a; box-shadow: 0 4px 20px rgba(0, 0, 0, .45); color: #000; font-family: "DejaVu Sans Condensed", "Liberation Sans", sans-serif; font-size: 11px; line-height: 16px; }
.dtitle { display: flex; align-items: center; justify-content: space-between; height: 24px; flex: none; background: #fff; padding: 0 8px 2px 3px; font-family: Lato, "Open Sans", sans-serif; font-size: 12px; }
.dclose { width: 12px; height: 22px; }
.dclose svg { width: 11px; height: 11px; fill: none; stroke: #000; stroke-width: 1.2; display: block; }
.dmenu { display: flex; gap: 15px; height: 18px; flex: none; background: #fff; padding-left: 7px; font-family: "Open Sans", "Noto Sans", sans-serif; font-size: 11px; }
.dbody { flex: 1; min-height: 0; display: flex; gap: 2px; padding: 4px 3px 2px 1px; border-bottom: 2px solid #fff; }
.side { width: 176px; flex: none; display: flex; flex-direction: column; border: 1px solid #a0a0a0; border-top-width: 2px; padding: 1px; font-family: Lato, "DejaVu Sans Condensed", sans-serif; line-height: 14px; }
.list { height: 183px; flex: none; background: #fcfcf3; }
.list table { width: 169px; border-collapse: collapse; table-layout: fixed; }
.list th { font-weight: normal; height: 25px; padding: 0; background: #fff; border-right: 1px solid #ddd; position: relative; }
.list td { height: 17px; padding: 0 0 1px; }
.list th.cnr, .list td.cnr { width: 34px; text-align: center; }
.list th.ckn { width: 86px; }
.list td.ckn { padding-left: 4px; }
.hot { background: #f0f0f0; }
.sort { position: absolute; left: 13px; top: 1px; width: 8px; height: 4px; fill: none; stroke: #555; }
.ratio { display: flex; align-items: center; gap: 4px; }
.ok:not(.btn) { width: 15px; height: 15px; }
.nav { flex: 1; min-height: 0; background: #fcfcf3; border-top: 1px solid #8a8a8a; overflow: hidden; white-space: nowrap; }
.navhead { height: 16px; padding-left: 4px; }
.nav li { position: relative; height: 16px; margin-left: 12px; padding-left: 9px; }
.nav li::before { content: ''; position: absolute; left: 0; top: 0; width: 9px; height: 8px; border-left: 1px dotted #666; border-bottom: 1px dotted #666; }
.nav li:not(:last-child)::after { content: ''; position: absolute; left: 0; top: 8px; height: 8px; border-left: 1px dotted #666; }
.nav a { display: inline-block; height: 16px; padding: 0 2px; color: #000; text-decoration: none; }
.nav a.sel { background: #0078d7; color: #fff; }

.content { flex: 1; min-width: 0; border: 1px solid #a0a0a0; border-left: 0; border-top-width: 2px; padding: 1px 2px 8px 0; display: flex; flex-direction: column; }
.content h1 { height: 20px; line-height: 20px; padding-left: 3px; background: #bdcbd9; font-size: 11px; flex: none; }
.split { flex: 1; min-height: 0; display: flex; gap: 7px; padding: 9px 4px 0 9px; }
.params { width: 420px; flex: none; display: flex; flex-direction: column; border-right: 1px solid #a8a8f0; border-bottom: 1px solid #a8a8f0; background: #e8eeee; }
.params h2 { height: 16px; line-height: 17px; padding-left: 2px; font-size: 11px; color: #1f3d63; background: linear-gradient(225deg, #f0f0f0 7px, #dce6f5 7px); flex: none; margin-right: -1px; }
.gridwrap { display: flex; }
.grid { width: 403px; flex: none; border-collapse: collapse; table-layout: fixed; background: #fff; font-family: Lato, "Liberation Sans", sans-serif; font-size: 11px; line-height: 13px; }
.c2 { width: 42px; } .c3 { width: 72px; } .c4 { width: 43px; }
.grid td { height: 16px; padding: 0; border: 1px solid #a0a0a0; white-space: nowrap; overflow: hidden; }
.name, .sym, .val div, .unit { height: 15px; overflow: hidden; }
.name, .sym { display: flex; }
.twig { flex: none; display: block; }
.line { fill: none; stroke: #d4d4d4; }
.sym { margin-left: 4px; }
.idx { font-size: 10px; line-height: 16px; margin-left: 1px; }
.grid td.val { text-align: right; padding-right: 4px; }
.unit { margin-left: 3px; }
.shade td { background: #ebebeb; }
.active td { background: #0078d7; color: #fff; border-color: #0078d7 #a0a0a0; }
.active td.val { outline: 1px dotted #f0a050; outline-offset: -1px; }
.vscroll { flex: 1; display: flex; flex-direction: column; align-items: center; background: #f0f0f0; border-right: 1px solid #a0a0a0; }
.vscroll .chev { margin: 4px 0 2px; }
.vscroll .above { flex: 204; } .vscroll .thumb { flex: 313; align-self: stretch; background: #cdcdcd; } .vscroll .below { flex: 42; }

.viewer { flex: 1; min-width: 0; display: flex; flex-direction: column; border: 1px solid #a8a8f0; border-top-color: #a0a0a0; border-left-color: #a0a0a0; }
.scene { flex: 1; min-height: 0; background: #fff; overflow: hidden; }
.scene svg { width: 100%; height: 100%; display: block; }
.tag { font: 16px "Liberation Sans", Arial, sans-serif; fill: #08084a; }
.vtools { display: flex; align-items: center; height: 30px; flex: none; gap: 5px; background: #f0f3fa; padding: 0 3px; }
.vbtn { flex: none; width: 25px; height: 21px; display: flex; align-items: center; justify-content: center; background: #e1e1e1; border: 1px solid #adadad; }
.vbtn.on { background: #cce4f7; border-color: #00559b; }
.vbtn svg { height: 17px; width: 19px; flex: none; }
.let { font: 11px "Liberation Serif", serif; fill: #223; }
.gap { width: 0; } .gap.mini { margin-left: -1px; }

.actions { display: flex; align-items: center; height: 36px; flex: none; padding: 0 9px; }
.btn { width: 81px; height: 21px; flex: none; background: #e1e1e1; border: 1px solid #adadad; margin-right: 9px; white-space: nowrap; line-height: 19px; }
.btn.sq { width: 25px; display: flex; align-items: center; justify-content: center; }
.btn.sq.back { margin-right: 5px; }
.btn.sq.fwd { margin-right: 82px; }
.btn:disabled { background: #ccc; border-color: #bfbfbf; color: #838383; }
.btn.graf { margin-left: 90px; }
.btn.small { width: 73px; }
.btn.small:last-child { margin-right: 0; }
.btn.push { margin-left: auto; }
.btn.ok { border: 2px solid #0078d7; line-height: 17px; }
.dstatus { height: 22px; flex: none; border: 1px solid #a0a0a0; border-color: #a0a0a0 #fff #fff #a0a0a0; }
</style>
